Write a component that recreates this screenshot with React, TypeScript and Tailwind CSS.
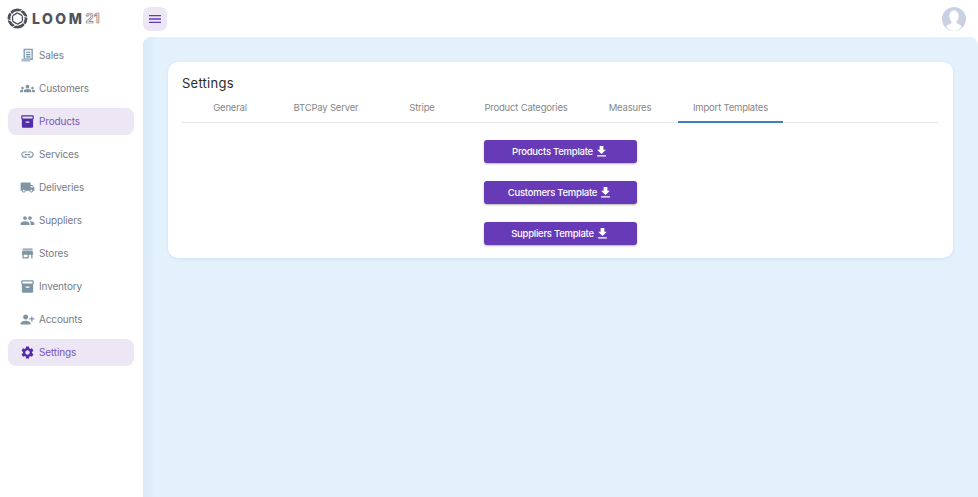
import { MdFileDownload, MdGroups, MdInventory2, MdLink, MdLocalShipping, MdMenu, MdPeople, MdPersonAdd, MdSettings, MdStore } from "react-icons/md";
import type { IconType } from "react-icons";

const SalesIcon: IconType = ({ className }) => (
  <svg className={className} viewBox="0 0 16 16" fill="none">
    <path d="M4.500 1.500h8.500v10.500H4.500Z" fill="#eef4f8" stroke="#7f9cb0" strokeWidth="1.400" />
    <path d="M6.500 4.500h4.500M6.500 7h4.500M6.500 9.500h4.500" stroke="#6f8ea3" strokeWidth="1.200" />
    <path d="M1.500 11.500h9.500v3H3c-1 0-1.500-.7-1.500-1.500Z" fill="#a9bdca" />
  </svg>
);

const navItems: { label: string; icon: IconType; active?: boolean; flip?: boolean }[] = [
  { label: "Sales", icon: SalesIcon },
  { label: "Customers", icon: MdGroups },
  { label: "Products", icon: MdInventory2, active: true },
  { label: "Services", icon: MdLink },
  { label: "Deliveries", icon: MdLocalShipping },
  { label: "Suppliers", icon: MdPeople },
  { label: "Stores", icon: MdStore },
  { label: "Inventory", icon: MdInventory2 },
  { label: "Accounts", icon: MdPersonAdd, flip: true },
  { label: "Settings", icon: MdSettings, active: true },
];

const tabs = [
  { label: "General", width: "w-[96px]" },
  { label: "BTCPay Server", width: "w-[96px]" },
  { label: "Stripe", width: "w-[96px]" },
  { label: "Product Categories", width: "w-[112px]" },
  { label: "Measures", width: "w-[96px]" },
  { label: "Import Templates", width: "w-[105px]", active: true },
];

const templates = ["Products Template", "Customers Template", "Suppliers Template"];

const Logo = () => (
  <div className="flex items-center pl-[7px]">
    <svg width="21" height="21" viewBox="0 0 24 24" fill="none">
      <circle cx="12" cy="12" r="9.800" stroke="#4a4f59" strokeWidth="3.200" />
      <path d="M12 5.500 17.600 8.750V15.250L12 18.500 6.400 15.250V8.750Z" stroke="#4a4f59" strokeWidth="1.500" />
      <path d="M12 5.500 19 1.500M17.600 8.750 24 11M17.600 15.250 21.500 21M12 18.500 5 22.500M6.400 15.250 0 13M6.400 8.750 2.500 3" stroke="#ffffff" strokeWidth="1" />
    </svg>
    <span className="ml-[4px] text-[14px] font-extrabold tracking-[2.500px] text-[#50545d]">LOOM</span>
    <span className="ml-[1px] text-[13px] font-bold tracking-[0.5px] text-[#f4f4f4] [-webkit-text-stroke:0.7px_#808080]">21</span>
  </div>
);

const Avatar = () => (
  <svg width="24" height="24" viewBox="0 0 24 24">
    <circle cx="12" cy="12" r="12" fill="#c9d1e2" />
    <path d="M12 3.600c3 0 4.600 2.600 4.600 5.600 0 2.200-.8 4.200-2 5.400v1.600c1.800 1 4 1.600 5.400 3.200A12 12 0 0 1 12 24a12 12 0 0 1-8-4.600c1.400-1.600 3.600-2.200 5.400-3.200V14.600c-1.200-1.200-2-3.200-2-5.400 0-3 1.600-5.600 4.600-5.600Z" fill="#ffffff" />
  </svg>
);

export default function App() {
  return (
    <div className="flex h-screen w-full overflow-hidden bg-white font-['Inter',sans-serif]">
      {/* SIDEBAR */}
      <aside className="flex w-[143px] shrink-0 flex-col">
        <div className="flex h-[37px] items-center">
          <Logo />
        </div>
        <nav className="flex flex-col gap-[6px] pl-[8px] pr-[9px] pt-[4.500px]">
          {navItems.map((item) => (
            <div
              key={item.label}
              className={`flex h-[27px] items-center gap-[4px] rounded-[8px] pl-[12px] text-[10px] tracking-[-0.15px] ${
                item.active ? "bg-[#ece6f5] text-[#7a55bd]" : "text-[#767c88]"
              }`}
            >
              <item.icon
                className={`h-[15px] w-[15px] ${item.active ? "text-[#512da8]" : "text-[#7f95a3]"} ${
                  item.flip ? "-scale-x-100" : ""
                }`}
              />
              <span>{item.label}</span>
            </div>
          ))}
        </nav>
      </aside>

      <div className="flex min-w-0 flex-1 flex-col">
        {/* TOP BAR */}
        <header className="flex h-[37px] shrink-0 items-center justify-between pr-[12px]">
          <button className="flex h-[24px] w-[24px] items-center justify-center rounded-[7px] bg-[#ece6f5] text-[#673ab7]">
            <MdMenu className="h-[16px] w-[16px]" />
          </button>
          <Avatar />
        </header>

        {/* CONTENT */}
        <main className="flex-1 rounded-t-[8px] bg-[#e3f1fd] bg-[linear-gradient(90deg,#dae9f6,#e3f1fd_14px)] px-[25px] pt-[25px]">
          <section className="h-[196px] rounded-[10px] bg-white px-[14px] pt-[13px] shadow-[0_1px_3px_rgba(100,130,170,0.15)]">
            <h1 className="text-[13px] leading-[16px] tracking-[0.25px] text-[#2b2b2b]">Settings</h1>
            <div className="mt-[1.500px] flex h-[30px] border-b border-[#e5e7eb]">
              {tabs.map((tab) => (
                <div
                  key={tab.label}
                  className={`flex h-[30px] items-center justify-center border-b-2 pt-[3px] text-[9.500px] tracking-[-0.2px] text-[#868686] ${tab.width} ${
                    tab.active ? "border-[#3f7fc4]" : "border-transparent"
                  }`}
                >
                  {tab.label}
                </div>
              ))}
            </div>
            <div className="flex flex-col items-center gap-[18px] pt-[17px]">
              {templates.map((label) => (
                <button
                  key={label}
                  className="flex h-[23px] w-[153px] items-center justify-center gap-[1px] rounded-[3px] bg-[#673ab7] text-[9.500px] font-medium tracking-[-0.25px] text-white shadow-[0_1px_2px_rgba(0,0,0,0.3)]"
                >
                  <span className="pt-[2px]">{label}</span>
                  <MdFileDownload className="h-[15px] w-[15px]" />
                </button>
              ))}
            </div>
          </section>
        </main>
      </div>
    </div>
  );
}
